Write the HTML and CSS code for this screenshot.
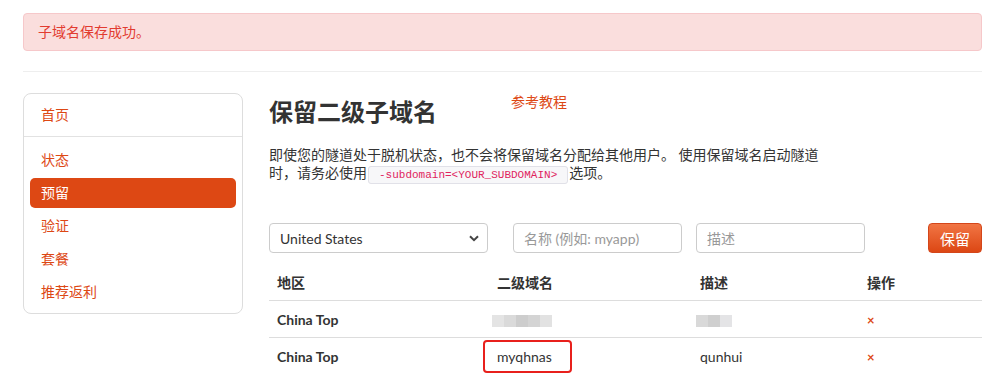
FILE: index.html
```html
<!DOCTYPE html>
<html lang="zh-CN">
<head>
    <meta charset="UTF-8">
    <title>保留二级子域名</title>
    <link rel="stylesheet" href="styles.css">
</head>
<body>

    <div class="page">
        <div class="alert">子域名保存成功。</div>
        <hr class="rule">

        <div class="layout">
            <!-- Sidebar navigation -->
            <ul class="side-nav">
                <li><a href="#">首页</a></li>
                <li class="divider"></li>
                <li><a href="#">状态</a></li>
                <li class="active"><a href="#">预留</a></li>
                <li><a href="#">验证</a></li>
                <li><a href="#">套餐</a></li>
                <li><a href="#">推荐返利</a></li>
            </ul>

            <div class="main">
                <div class="title-row">
                    <h1>保留二级子域名</h1>
                    <a class="help-link" href="#">参考教程</a>
                </div>
                <p class="intro">即使您的隧道处于脱机状态，也不会将保留域名分配给其他用户。 使用保留域名启动隧道时，请务必使用<code>-subdomain=&lt;YOUR_SUBDOMAIN&gt;</code>选项。</p>

                <form class="reserve-form">
                    <div class="select-wrap">
                        <select class="field select">
                            <option>United States</option>
                            <option>China Top</option>
                        </select>
                        <svg class="chevron" width="10" height="7" viewBox="0 0 10 7">
                            <path d="M1 1.2 L5 5.2 L9 1.2" fill="none" stroke="#444" stroke-width="2"/>
                        </svg>
                    </div>
                    <input class="field name" type="text" placeholder="名称 (例如: myapp)">
                    <input class="field desc" type="text" placeholder="描述">
                    <button class="btn" type="button">保留</button>
                </form>

                <table class="domains">
                    <thead>
                        <tr>
                            <th class="col-region">地区</th>
                            <th class="col-sub">二级域名</th>
                            <th class="col-desc">描述</th>
                            <th>操作</th>
                        </tr>
                    </thead>
                    <tbody>
                        <tr>
                            <td class="region">China Top</td>
                            <td><span class="blur blur-sub"></span></td>
                            <td><span class="blur blur-desc"></span></td>
                            <td><a class="remove" href="#">×</a></td>
                        </tr>
                        <tr>
                            <td class="region">China Top</td>
                            <td class="marked">myqhnas<span class="mark-box"></span></td>
                            <td>qunhui</td>
                            <td><a class="remove" href="#">×</a></td>
                        </tr>
                    </tbody>
                </table>
            </div>
        </div>
    </div>

</body>
</html>
```

FILE: styles.css
```css
/* --- General --- */
body {
    margin: 0;
    font-family: Lato, "Noto Sans CJK SC", sans-serif;
    font-size: 14px;
    color: #333;
    background: #fff;
}

a {
    color: #dd4814;
    text-decoration: none;
}

.page {
    width: 959px;
    padding: 13px 0 0 23px;
}

/* --- Alert --- */
.alert {
    background-color: #fadedd;
    border: 1px solid #f6c8ca;
    border-radius: 4px;
    color: #e23b30;
    line-height: 36px;
    padding: 0 14px;
}

.rule {
    border: none;
    border-top: 1px solid #eee;
    margin: 20px 0 0;
}

.layout {
    display: flex;
    margin-top: 21px;
}

/* --- Sidebar --- */
.side-nav {
    list-style: none;
    margin: 0;
    padding: 6px;
    width: 206px;
    border: 1px solid #ddd;
    border-radius: 8px;
    align-self: flex-start;
}

.side-nav li a {
    display: block;
    line-height: 30px;
    padding: 0 11px;
    border-radius: 5px;
}

.side-nav li + li {
    margin-top: 3px;
}

.side-nav .divider {
    height: 1px;
    background: #e2e2e2;
    margin: 6px -6px 8px;
}

.side-nav .divider + li {
    margin-top: 0;
}

.side-nav .active a {
    background-color: #dd4814;
    color: #fff;
}

/* --- Main column --- */
.main {
    flex: 1;
    margin-left: 26px;
}

.title-row {
    display: flex;
    align-items: flex-start;
}

.title-row h1 {
    margin: 4px 0 0;
    font-size: 24px;
    line-height: 30px;
    font-weight: bold;
    color: #333;
}

.help-link {
    margin: -1px 0 0 74px;
    line-height: 20px;
}

.intro {
    width: 560px;
    margin: 19px 0 0;
    line-height: 18px;
}

.intro code {
    font-family: "Liberation Mono", monospace;
    font-size: 11px;
    line-height: 14px;
    color: #e0245e;
    background: #f7f7f9;
    border: 1px solid #e1e1e8;
    border-radius: 3px;
    padding: 2px 10px;
    margin: 0 1px;
}

/* --- Reserve form --- */
.reserve-form {
    display: flex;
    margin-top: 41px;
}

.field {
    box-sizing: border-box;
    height: 30px;
    border: 1px solid #ccc;
    border-radius: 4px;
    font-family: Lato, "Noto Sans CJK SC", sans-serif;
    font-size: 14px;
    color: #333;
    background: #fff;
    padding: 0 10px;
    outline: none;
}

.field::placeholder {
    color: #999;
}

.select-wrap {
    position: relative;
    width: 219px;
}

.select {
    width: 100%;
    appearance: none;
    -webkit-appearance: none;
}

.chevron {
    position: absolute;
    right: 9px;
    top: 12px;
}

.name {
    width: 169px;
    margin-left: 25px;
}

.desc {
    width: 169px;
    margin-left: 14px;
}

.btn {
    margin-left: auto;
    width: 54px;
    height: 30px;
    border: 1px solid #d4461a;
    border-radius: 4px;
    background: linear-gradient(#f17544, #dc4714);
    color: #fff;
    font-family: Lato, "Noto Sans CJK SC", sans-serif;
    font-size: 15px;
    cursor: pointer;
}

/* --- Table --- */
.domains {
    width: 100%;
    margin-top: 11px;
    border-collapse: collapse;
}

.domains th,
.domains td {
    text-align: left;
    height: 36px;
    padding: 0 8px;
    border-bottom: 1px solid #ddd;
}

.domains tbody tr:last-child td {
    border-bottom: none;
}

.domains th {
    font-weight: bold;
}

.col-region { width: 204px; }
.col-sub { width: 187px; }
.col-desc { width: 151px; }

.region {
    font-weight: bold;
}

.blur {
    display: inline-block;
    height: 12px;
    vertical-align: middle;
}

.blur-sub {
    width: 60px;
    margin-left: -5px;
    background: linear-gradient(90deg, #e4e4e4 0 12px, #dadada 12px 24px, #cdcdcd 24px 36px, #d4d4d4 36px 48px, #e2e2e2 48px);
}

.blur-desc {
    width: 36px;
    margin-left: -4px;
    background: linear-gradient(90deg, #d9d9d9 0 12px, #cfcfcf 12px 24px, #e4e4e6 24px);
}

.remove {
    font-size: 13px;
    font-weight: bold;
}

/* annotation frame drawn over the cell */
.marked {
    position: relative;
}

.mark-box {
    position: absolute;
    left: -6px;
    top: 2px;
    width: 89px;
    height: 33px;
    box-sizing: border-box;
    border: 2px solid #e8201c;
    border-radius: 4px;
}
```
